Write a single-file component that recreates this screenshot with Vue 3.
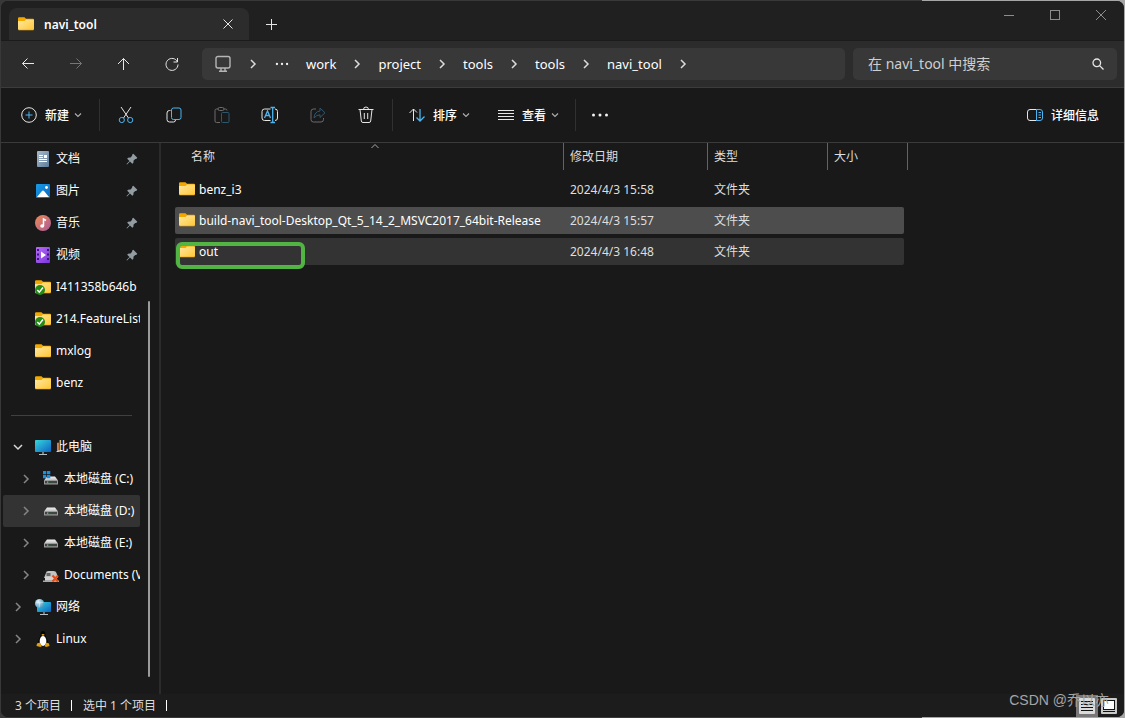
<script setup>
import { ref } from 'vue'

const search = ref('')
const crumbs = ['work', 'project', 'tools', 'tools', 'navi_tool']
const pinned = [
  { label: '文档', icon: 'doc' },
  { label: '图片', icon: 'picture' },
  { label: '音乐', icon: 'music' },
  { label: '视频', icon: 'video' }
]
const folders = [
  { label: 'I411358b646b', icon: 'folder-ok' },
  { label: '214.FeatureList', icon: 'folder-ok' },
  { label: 'mxlog', icon: 'folder' },
  { label: 'benz', icon: 'folder' }
]
const tree = [
  { label: '此电脑', icon: 'pc', level: 0, open: true },
  { label: '本地磁盘 (C:)', icon: 'drive-win', level: 1 },
  { label: '本地磁盘 (D:)', icon: 'drive', level: 1, current: true },
  { label: '本地磁盘 (E:)', icon: 'drive', level: 1 },
  { label: 'Documents (V', icon: 'drive-off', level: 1 },
  { label: '网络', icon: 'network', level: 0 },
  { label: 'Linux', icon: 'linux', level: 0 }
]
const files = [
  { name: 'benz_i3', date: '2024/4/3 15:58', type: '文件夹', state: '' },
  { name: 'build-navi_tool-Desktop_Qt_5_14_2_MSVC2017_64bit-Release', date: '2024/4/3 15:57', type: '文件夹', state: 'selected' },
  { name: 'out', date: '2024/4/3 16:48', type: '文件夹', state: 'hovered' }
]
const actions = [
  { id: 'cut', label: '剪切' },
  { id: 'copy', label: '复制' },
  { id: 'paste', label: '粘贴', off: true },
  { id: 'rename', label: '重命名' },
  { id: 'share', label: '共享', off: true },
  { id: 'delete', label: '删除' }
]
</script>

<template>
  <svg class="sprite" aria-hidden="true">
    <defs>
      <linearGradient id="gFolder" x1="0" y1="0" x2="1" y2="1"><stop offset="0" stop-color="#ffe9a2" /><stop offset="1" stop-color="#ffc634" /></linearGradient>
      <linearGradient id="gDoc" x1="0" y1="0" x2="1" y2="1"><stop offset="0" stop-color="#a9bccd" /><stop offset="1" stop-color="#5d7c99" /></linearGradient>
      <linearGradient id="gPic" x1="0" y1="0" x2="1" y2="1"><stop offset="0" stop-color="#1a9be8" /><stop offset="1" stop-color="#0a68bd" /></linearGradient>
      <linearGradient id="gMusic" x1="0" y1="0" x2="1" y2="1"><stop offset="0" stop-color="#f08a52" /><stop offset="1" stop-color="#a85a9c" /></linearGradient>
      <linearGradient id="gVideo" x1="0" y1="0" x2="1" y2="1"><stop offset="0" stop-color="#b86cf5" /><stop offset="1" stop-color="#7a36dc" /></linearGradient>
      <linearGradient id="gPc" x1="0" y1="0" x2="1" y2="1"><stop offset="0" stop-color="#36d6dc" /><stop offset="1" stop-color="#0d63c4" /></linearGradient>
      <linearGradient id="gDrive" x1="0" y1="0" x2="0" y2="1"><stop offset="0" stop-color="#f2f2f2" /><stop offset="1" stop-color="#bdbdbd" /></linearGradient>
      <radialGradient id="gGlobe" cx="0.35" cy="0.3" r="0.8"><stop offset="0" stop-color="#d5f1fb" /><stop offset="1" stop-color="#3d8fb8" /></radialGradient>
      <symbol id="folder" viewBox="0 0 16 16">
        <path d="M0 2.500Q0 1.300 1.200 1.300H6.500L8 2.800H15Q16 2.800 16 3.800V8H0Z" fill="#f3a800" />
        <path d="M0 5H6.500L8 3.600H15Q16 3.600 16 4.600V13Q16 14 15 14H1Q0 14 0 13Z" fill="url(#gFolder)" />
        <path d="M0 13Q0 14 1 14H15Q16 14 16 13" fill="none" stroke="#e5a017" stroke-width=".6" />
      </symbol>
      <symbol id="folder-ok" viewBox="0 0 16 16">
        <use href="#folder" width="16" height="16" />
        <circle cx="5" cy="11" r="5" fill="#258b17" />
        <path d="M2.300 11L4.300 13.200L8 8.500" fill="none" stroke="#fff" stroke-width="1.500" />
      </symbol>
      <symbol id="doc" viewBox="0 0 16 16">
        <rect x="2" y="0" width="12" height="16" rx="1" fill="url(#gDoc)" />
        <path d="M4 4.500H8M4 6.500H8M4 8.500H12M4 10.500H12" stroke="#fff" stroke-width="1" /><rect x="9" y="4" width="3" height="3" fill="#fff" />
      </symbol>
      <symbol id="picture" viewBox="0 0 16 16">
        <rect x="1" y="1" width="14" height="14" rx="1" fill="url(#gPic)" />
        <path d="M2 14L7 8Q8 7 9 8L14 14Z" fill="#fff" /><circle cx="11.500" cy="4.500" r="1.400" fill="#fff" />
      </symbol>
      <symbol id="music" viewBox="0 0 16 16">
        <circle cx="8" cy="8" r="8" fill="url(#gMusic)" />
        <path d="M8.500 11V4L11 5.500" fill="none" stroke="#fff" stroke-width="1.500" /><ellipse cx="7.200" cy="11" rx="2" ry="1.700" fill="#fff" />
      </symbol>
      <symbol id="video" viewBox="0 0 16 16">
        <rect x="1" y="0" width="14" height="16" rx="1" fill="url(#gVideo)" />
        <path d="M3 2V14.500M13 2V14.500" stroke="#3a1679" stroke-width="2" stroke-dasharray="2 2.500" /><path d="M6 4.500L11 8L6 11.500Z" fill="#fff" />
      </symbol>
      <symbol id="pc" viewBox="0 0 16 16">
        <rect x="0" y="1" width="16" height="12" rx=".8" fill="url(#gPc)" />
        <path d="M8 13V15M4 15.500H12" stroke="#b3bdc4" stroke-width="1.200" />
      </symbol>
      <symbol id="drive" viewBox="0 0 16 16">
        <path d="M4 4.500H12L15 8.500H1Z" fill="url(#gDrive)" />
        <rect x="1" y="8" width="14" height="4.500" rx=".6" fill="#9b9b9b" /><rect x="2" y="9" width="12" height="2.300" fill="#3f4543" /><rect x="4" y="9.500" width="1.300" height="1.300" fill="#39e65a" />
      </symbol>
      <symbol id="drive-win" viewBox="0 0 16 16">
        <use href="#drive" y="1" width="16" height="16" />
        <path d="M0 0H3.300V3.300H0ZM4 0H7.300V3.300H4ZM0 4H3.300V7.300H0ZM4 4H7.300V7.300H4Z" fill="#1492e6" />
      </symbol>
      <symbol id="drive-off" viewBox="0 0 16 16">
        <path d="M3 6Q3 4 5.500 4H10.500Q13 4 13.500 6L15 11H1Z" fill="#c2c2c2" /><rect x="3.500" y="6" width="4" height="3" fill="#666" />
        <path d="M0 13.500H2V10.500H14V13.500H16V15H0Z" fill="#a9a9a9" />
        <rect x="2" y="10" width="12" height="3" fill="#d2d2d2" />
        <path d="M9.500 8.500L15 14.500M15 8.500L9.500 14.500" stroke="#e24e19" stroke-width="2" />
      </symbol>
      <symbol id="network" viewBox="0 0 16 16">
        <rect x="2" y="3" width="14" height="10" rx=".8" fill="url(#gPc)" /><circle cx="4.500" cy="4.500" r="4.500" fill="url(#gGlobe)" />
        <path d="M1 3Q4 5 8.500 3M3 1Q6 4 4 8.500" stroke="#effaff" stroke-width=".5" fill="none" /><path d="M9 13V15M5 15.500H13" stroke="#b3bdc4" stroke-width="1.100" />
      </symbol>
      <symbol id="linux" viewBox="0 0 16 16">
        <path d="M8 0Q5.500 0 5.500 3.500Q5.500 6 3.500 9Q2 13 4 14.500H12Q14 13 12.500 9Q10.500 6 10.500 3.500Q10.500 0 8 0Z" fill="#060606" />
        <ellipse cx="8" cy="10" rx="3.300" ry="5" fill="#fff" /><ellipse cx="8" cy="3.800" rx="1.500" ry=".9" fill="#e8a713" />
        <path d="M2 12.500L4.500 11.500L7 15L5.500 16L1.500 15Z M14 12.500L11.500 11.500L9.500 15L11 16L14.500 15Z" fill="#dfa00e" />
      </symbol>
      <symbol id="pin" viewBox="0 0 12 12">
        <path d="M7.300 .8L11.300 4.800L10.200 6L9.300 5.900L7.600 7.600L7.300 10L6.300 10.800L4 8.500L1 11.500L.5 11L3.500 8L1.200 5.700L2 4.700L4.500 4.400L6.200 2.700L6 1.800Z" fill="#929da3" />
      </symbol>
      <symbol id="chevron" viewBox="0 0 12 12"><path d="M4 2L8 6L4 10" fill="none" stroke="currentColor" stroke-width="1.500" /></symbol>
      <symbol id="chevron-down" viewBox="0 0 12 12"><path d="M3 4.500L6 7.500L9 4.500" fill="none" stroke="currentColor" stroke-width="1.100" /></symbol>
      <symbol id="dots" viewBox="0 0 18 18"><circle cx="2.500" cy="9" r="1.500" /><circle cx="9" cy="9" r="1.500" /><circle cx="15.500" cy="9" r="1.500" /></symbol>
      <symbol id="cut" viewBox="0 0 18 18"><path d="M4 1L11.500 12M14 1L6.500 12" /><g stroke="#4cb5f0"><circle cx="4.800" cy="14" r="2.600" /><circle cx="13.200" cy="14" r="2.600" /></g></symbol>
      <symbol id="copy" viewBox="0 0 18 18"><path d="M5.500 4.500H4.500Q2 4.500 2 7V13.500Q2 16 4.500 16H8.500Q10.500 16 10.500 14" /><rect x="6.500" y="2" width="9.500" height="11.500" rx="2" stroke="#4cb5f0" /></symbol>
      <symbol id="paste" viewBox="0 0 18 18"><path d="M5 3H3.500Q2 3 2 4.500V15Q2 16.500 3.500 16.500H7M11 3H12.500Q14 3 14 4.500" /><rect x="5" y="1.500" width="6" height="3" rx="1.500" /><rect x="8.500" y="6.500" width="7.500" height="10" rx="1" stroke="#4cb5f0" /></symbol>
      <symbol id="rename" viewBox="0 0 18 18"><path d="M9.500 3H3.500Q1 3 1 5.500V12Q1 14.500 3.500 14.500H9.500M14 3Q16.500 3 16.500 5.500V12Q16.500 14.500 14 14.500" /><path d="M3.500 12L6.500 5L9.500 12M4.500 9.500H8.500M9.500 1.500H14M11.700 1.500V16.500M9.500 16.500H14" stroke="#4cb5f0" stroke-width="1.300" /></symbol>
      <symbol id="share" viewBox="0 0 18 18"><path d="M7 3H4.500Q2 3 2 5.500V13.500Q2 16 4.500 16H12Q14.500 16 14.500 13.500V12" /><path d="M11 2L16 6.800L11 11.500V8.800Q7.500 8.800 5 12Q5.500 5.500 11 5Z" stroke="#4cb5f0" /></symbol>
      <symbol id="delete" viewBox="0 0 18 18"><path d="M1.500 3.500H16.500M6.500 3.500Q6.500 1 9 1Q11.500 1 11.500 3.500M3 3.500L4.300 15Q4.500 16.500 6 16.500H12Q13.500 16.500 13.700 15L15 3.500M7.300 7V13M10.700 7V13" /></symbol>
    </defs>
  </svg>

  <div class="window">
    <header class="titlebar">
      <div class="tab">
        <svg class="i16"><use href="#folder" /></svg>
        <span class="tab-name">navi_tool</span>
        <button class="icon-btn tab-close" aria-label="关闭标签页"><svg width="12" height="12" viewBox="0 0 12 12" class="line"><path d="M1.500 1.500L10.500 10.500M10.500 1.500L1.500 10.500" /></svg></button>
      </div>
      <button class="icon-btn new-tab" aria-label="新建标签页"><svg width="12" height="12" viewBox="0 0 12 12" class="line"><path d="M6.500 1V12M1 6.500H12" /></svg></button>
      <div class="captions">
        <button class="icon-btn" aria-label="最小化"><svg width="10" height="10" viewBox="0 0 10 10" class="line"><path d="M0 5.500H10" /></svg></button>
        <button class="icon-btn" aria-label="最大化"><svg width="10" height="10" viewBox="0 0 10 10" class="line"><rect x=".5" y=".5" width="9" height="9" /></svg></button>
        <button class="icon-btn" aria-label="关闭"><svg width="10" height="10" viewBox="0 0 10 10" class="line"><path d="M0 0L10 10M10 0L0 10" /></svg></button>
      </div>
    </header>

    <div class="navbar">
      <div class="nav-buttons">
        <button class="icon-btn" aria-label="后退"><svg width="14" height="14" viewBox="0 0 14 14" class="line"><path d="M13 6.500H1.500M6.500 1.500L1.500 6.500L6.500 11.500" /></svg></button>
        <button class="icon-btn" aria-label="前进" disabled><svg width="14" height="14" viewBox="0 0 14 14" class="line"><path d="M1 6.500H12.500M7.500 1.500L12.500 6.500L7.500 11.500" /></svg></button>
        <button class="icon-btn" aria-label="向上"><svg width="14" height="14" viewBox="0 0 14 14" class="line"><path d="M6.500 13V1.500M1 7L6.500 1.500L12 7" /></svg></button>
        <button class="icon-btn" aria-label="刷新"><svg width="14" height="14" viewBox="0 0 14 14" class="line"><path d="M12.500 5A6 6 0 1 0 13 7.500M12.500 1V5H8.500" /></svg></button>
      </div>
      <nav class="address" aria-label="地址">
        <svg class="device" width="18" height="18" viewBox="0 0 18 18"><rect x="2" y="1.500" width="14" height="11.500" rx="2" /><path d="M7 13V16M11 13V16M5 16.200H13" /></svg>
        <svg class="chev"><use href="#chevron" /></svg>
        <button class="icon-btn more-crumbs" aria-label="更多"><svg class="dots" width="14" height="14"><use href="#dots" /></svg></button>
        <template v-for="(c, i) in crumbs" :key="i">
          <a class="crumb" href="#">{{ c }}</a>
          <svg class="chev"><use href="#chevron" /></svg>
        </template>
      </nav>
      <label class="search">
        <input v-model="search" type="text" aria-label="搜索" placeholder="在 navi_tool 中搜索" />
        <svg width="12" height="12" viewBox="0 0 12 12" class="line bold"><circle cx="4.800" cy="4.800" r="3.800" /><path d="M7.600 7.600L11.500 11.500" /></svg>
      </label>
    </div>

    <div class="toolbar">
      <button class="cmd cmd-new">
        <svg width="16" height="16" viewBox="0 0 16 16" class="line"><circle cx="8" cy="8" r="7.300" /><path d="M8 4.500V11.500M4.500 8H11.500" stroke="#4cb5f0" /></svg>
        <span>新建</span><svg class="down"><use href="#chevron-down" /></svg>
      </button>
      <i class="divider"></i>
      <div class="actions">
        <button v-for="a in actions" :key="a.id" class="icon-btn" :aria-label="a.label" :disabled="a.off"><svg class="line" width="18" height="18"><use :href="'#' + a.id" /></svg></button>
      </div>
      <i class="divider"></i>
      <button class="cmd">
        <svg width="16" height="16" viewBox="0 0 16 16" class="line"><path d="M4.500 14V2M.5 6L4.500 2L8 5.500" /><path d="M11 2V14M7.500 10.500L11 14L15.500 9.500" stroke="#4cb5f0" stroke-width="1.300" /></svg>
        <span>排序</span><svg class="down"><use href="#chevron-down" /></svg>
      </button>
      <button class="cmd cmd-view">
        <svg width="16" height="16" viewBox="0 0 16 16" class="line"><path d="M0 3.500H16M0 6.500H16M0 9.500H16M0 12.500H16" /></svg>
        <span>查看</span><svg class="down"><use href="#chevron-down" /></svg>
      </button>
      <i class="divider"></i>
      <button class="icon-btn more" aria-label="查看更多"><svg class="dots" width="18" height="18"><use href="#dots" /></svg></button>
      <button class="cmd details">
        <svg width="16" height="16" viewBox="0 0 16 16" class="line"><path d="M9.500 2.500H3Q.5 2.500 .5 5V11Q.5 13.500 3 13.500H9.500" /><path d="M9.500 2.500H13Q15.500 2.500 15.500 5V11Q15.500 13.500 13 13.500H9.500ZM11.500 5.500H14M11.500 8H14M11.500 10.500H14" stroke="#4cb5f0" /></svg>
        <span>详细信息</span>
      </button>
    </div>

    <div class="body">
      <aside class="sidebar">
        <ul class="quick">
          <li v-for="p in pinned" :key="p.label">
            <a class="item" href="#"><svg class="i16"><use :href="'#' + p.icon" /></svg><span class="label">{{ p.label }}</span><svg class="pin"><use href="#pin" /></svg></a>
          </li>
          <li v-for="f in folders" :key="f.label">
            <a class="item" href="#"><svg class="i16"><use :href="'#' + f.icon" /></svg><span class="label">{{ f.label }}</span></a>
          </li>
        </ul>
        <hr />
        <ul>
          <li v-for="t in tree" :key="t.label" :class="['node', { nested: t.level, current: t.current }]">
            <button :class="['icon-btn', 'expander', { open: t.open }]" :aria-label="'展开 ' + t.label"><svg class="chev"><use href="#chevron" /></svg></button>
            <a class="item" href="#"><svg class="i16"><use :href="'#' + t.icon" /></svg><span class="label">{{ t.label }}</span></a>
          </li>
        </ul>
        <div class="scrollbar"></div>
      </aside>

      <main class="content">
        <svg class="sort-mark" width="10" height="6" viewBox="0 0 10 6"><path d="M1.500 5L5 1.500L8.500 5" /></svg>
        <table>
          <colgroup><col class="c-name" /><col class="c-date" /><col class="c-type" /><col class="c-size" /></colgroup>
          <thead>
            <tr>
              <th scope="col"><div>名称</div></th><th scope="col"><div>修改日期</div></th><th scope="col"><div>类型</div></th><th scope="col"><div>大小</div></th>
            </tr>
          </thead>
          <tbody>
            <tr v-for="f in files" :key="f.name" :class="f.state">
              <td class="name"><a href="#"><svg class="i16"><use href="#folder" /></svg><span>{{ f.name }}</span></a><i v-if="f.name === 'out'" class="mark"></i></td>
              <td>{{ f.date }}</td><td>{{ f.type }}</td><td></td>
            </tr>
          </tbody>
        </table>
      </main>
    </div>

    <footer class="status">
      <span>3 个项目</span><i></i><span>选中 1 个项目</span><i></i>
      <div class="views">
        <button class="icon-btn on" aria-label="详细信息视图"><svg width="16" height="16" viewBox="0 0 16 16"><rect width="16" height="16" rx="1" fill="#dadada" /><path d="M2 3.500H14M2 6.500H14M2 9.500H14M2 12.500H14" stroke="#111" /></svg></button>
        <button class="icon-btn" aria-label="大图标视图"><svg width="16" height="16" viewBox="0 0 16 16"><rect width="16" height="16" rx="1" fill="#c9c9c9" /><rect x="2.500" y="2.500" width="11" height="9" fill="#fff" stroke="#111" /><path d="M2 13.500H14" stroke="#111" /></svg></button>
      </div>
      <span class="watermark">CSDN @乔以亦</span>
    </footer>
  </div>
</template>

<style>
body { background: linear-gradient(to right, #383838 82%, #a6a6a6 82%); }
</style>

<style scoped>
* { box-sizing: border-box; }
.sprite { position: absolute; width: 0; height: 0; }
.window {
  display: flex; flex-direction: column; height: 100vh;
  border: 1px solid transparent; border-radius: 8px; overflow: hidden;
  background: #191919; background-clip: padding-box; color: #fff;
  font: 12px/16px "Noto Sans", "Noto Sans CJK SC", sans-serif;
}
button, input { font: inherit; color: inherit; }
button { border: 0; background: none; padding: 0; }
a { color: inherit; text-decoration: none; }
svg { flex: none; display: block; }
ul { list-style: none; margin: 0; padding: 0; }
.icon-btn { display: flex; align-items: center; justify-content: center; }
.icon-btn:disabled { opacity: .4; }
.line { fill: none; stroke: #e6e6e6; stroke-width: 1; }
.line.bold { stroke-width: 1.3; }
.dots { fill: #f2f2f2; }
.i16 { width: 16px; height: 16px; }
.chev, .down { width: 12px; height: 12px; color: #dcdcdc; }
.down { color: #b0b0b0; }

.titlebar { display: flex; flex: 0 0 40px; background: #202020; border-bottom: 1px solid #1b1b1b; }
.tab { display: flex; align-items: center; width: 240px; margin: 7px 0 0 8px; padding: 0 9px; background: #2c2c2c; border-radius: 8px 8px 0 0; }
.tab-name { flex: 1; margin-left: 10px; padding-top: 2px; font-weight: 600; }
.tab-close { width: 24px; height: 24px; }
.new-tab { width: 32px; margin: 7px 0 0 6px; }
.captions { display: flex; margin-left: auto; height: 28px; opacity: .55; }
.captions .icon-btn { width: 46px; }

.navbar { display: flex; flex: 0 0 47px; align-items: center; gap: 8px; padding-right: 7px; background: #2c2c2c; border-bottom: 1px solid #3c3c3c; font-size: 13px; }
.nav-buttons { display: flex; width: 193px; padding-left: 3px; }
.nav-buttons .icon-btn { flex: 0 0 48px; height: 32px; }
.address { display: flex; flex: 1; min-width: 0; align-items: center; height: 32px; padding-left: 12px; background: #383838; border-radius: 5px; }
.device { fill: none; stroke: #b5b5b5; stroke-width: 1.4; margin-right: 15px; }
.more-crumbs { width: 46px; }
.crumb { margin: 0 15px; }
.more-crumbs + .crumb { margin-left: 1px; }
.search { display: flex; align-items: center; flex: 0 1 264px; height: 32px; padding: 0 13px 0 15px; background: #383838; border-radius: 5px; font-size: 14px; }
.search input { flex: 1; min-width: 0; border: 0; outline: 0; padding: 0; background: none; }
.search input::placeholder { color: #cfcfcf; opacity: 1; }

.toolbar { display: flex; flex: 0 0 55px; align-items: center; background: #191919; border-bottom: 1px solid #3a3a3a; }
.cmd { display: flex; align-items: center; width: 90px; padding-left: 16px; white-space: nowrap; font-weight: 500; }
.cmd span { margin: 0 3px 0 8px; padding-top: 1px; }
.cmd-new { width: 98px; padding-left: 20px; }
.cmd-view { width: 92px; padding-left: 15px; }
.divider { width: 1px; height: 32px; background: #303030; }
.actions { display: flex; width: 292px; padding-left: 2px; }
.actions .icon-btn { width: 48px; height: 32px; }
.more { width: 48px; height: 32px; }
.details { width: auto; margin-left: auto; padding: 0 25px 0 0; }
.cmd.details span { margin-right: 0; }

.body { display: flex; flex: 1; min-height: 0; }
.sidebar { position: relative; flex: 0 0 160px; padding: 0 19px 0 2px; border-right: 2px solid #2b2b2b; overflow: hidden; }
.item { display: flex; align-items: center; flex: 1; min-width: 0; height: 32px; }
.label { flex: 1; margin-left: 5px; overflow: hidden; white-space: nowrap; }
.quick .item { padding-left: 32px; }
.pin { width: 12px; height: 12px; margin-right: 2px; }
hr { height: 1px; border: 0; margin: 16px 8px 15px 8px; background: #404040; }
.node { display: flex; align-items: center; border-radius: 2px; }
.node.nested { padding-left: 8px; }
.node.current { background: #333; }
.expander { flex: 0 0 32px; padding-right: 3px; }
.expander .chev { color: #858585; }
.expander.open .chev { color: #d8d8d8; transform: rotate(90deg); }
.scrollbar { position: absolute; right: 9px; top: 158px; bottom: 17px; width: 2px; border-radius: 1px; background: #9b9b9b; }

.content { position: relative; flex: 1; min-width: 0; padding-left: 14px; overflow: hidden; }
.sort-mark { position: absolute; left: 209px; top: 0; fill: none; stroke: #a8a8a8; }
table { width: 729px; margin-top: -4px; table-layout: fixed; border-collapse: separate; border-spacing: 0 4px; }
.c-name { width: 389px; }
.c-date { width: 144px; }
.c-type { width: 120px; }
th, td { padding: 0; text-align: left; font-weight: 400; color: #dedede; white-space: nowrap; }
th { height: 29px; vertical-align: top; }
th div { height: 27px; padding: 6px 0 0 6px; border-right: 1px solid #636363; }
th:first-child div { padding-left: 16px; }
th:last-child div { margin-right: -4px; }
td { height: 27px; padding-left: 6px; }
td:first-child { position: relative; padding-left: 4px; border-radius: 2px 0 0 2px; color: #fff; }
td:last-child { border-radius: 0 2px 2px 0; }
.name a { display: flex; align-items: center; gap: 4px; }
.name svg { margin-bottom: 2px; }
.selected td { background: #4d4d4d; }
.hovered td { background: #333; }
.mark { position: absolute; left: 1px; top: 4px; width: 129px; height: 27px; border: 4px solid #52b543; border-radius: 6px; }

.status { position: relative; display: flex; flex: 0 0 23px; align-items: center; padding-left: 14px; background: #1c1c1c; color: #dedede; }
.status > i { width: 1px; height: 11px; margin: 0 11px 0 10px; background: #fff; }
.views { display: flex; margin-left: auto; padding-right: 4px; }
.views .icon-btn { width: 22px; height: 22px; }
.views .on { background: #777; }
.watermark { position: absolute; right: 15px; bottom: 8px; font: 14px/18px "Liberation Sans", "Noto Sans CJK SC", sans-serif; color: #a5a5a5; }
</style>
